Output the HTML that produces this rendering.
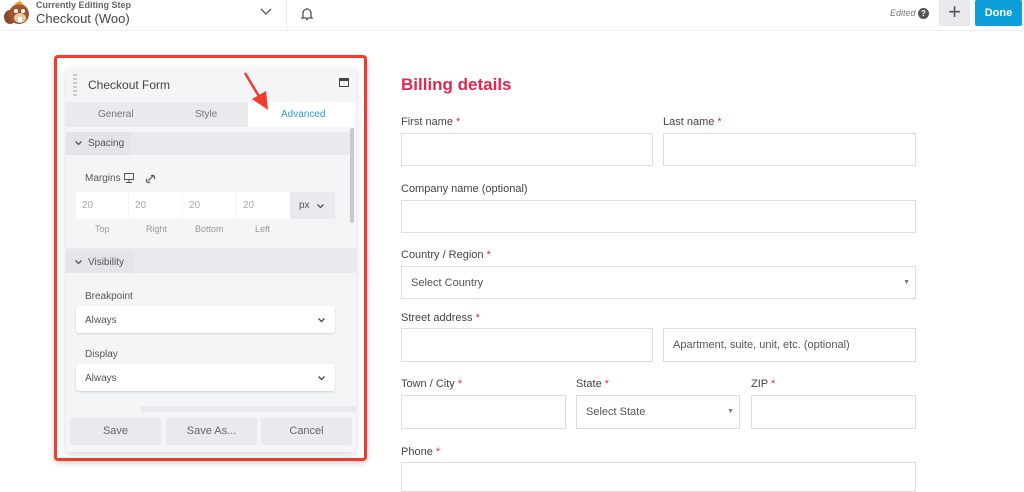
<!DOCTYPE html>
<html><head><meta charset="utf-8"><style>
*{box-sizing:border-box;margin:0;padding:0}
body{width:1024px;height:473px;overflow:hidden;background:#fff;font-family:"Liberation Sans",sans-serif;position:relative;color:#444}
.a{position:absolute}
.top{left:0;top:0;width:1024px;height:31px;border-bottom:1px solid #eceef0;background:#fff}
.inp{position:absolute;border:1px solid #ddd;background:#fff}
.lbl{position:absolute;font-size:11px;color:#444}
.lbl b{color:#e2264d;font-weight:normal}
.sel{font-size:11px;color:#555;padding:10px 0 0 9px}
.pl{font-size:10px;color:#555}
.mi{position:absolute;top:192px;height:27px;background:#fff;font-size:10px;color:#aaa;padding:8px 0 0 6px}
.ml{position:absolute;top:224px;font-size:9px;color:#999}
.ss{position:absolute;left:76px;width:259px;height:27px;background:#fff;border-radius:3px;box-shadow:0 1px 2px rgba(0,0,0,.15);font-size:10px;color:#555;padding:9px 0 0 9px}
.btn{position:absolute;top:418px;height:27px;width:91px;background:#e8eaed;font-size:11px;color:#666;text-align:center;line-height:27px;border-radius:2px}
.chev{position:absolute}
</style></head><body>
<div class="a top"></div>
<svg class="a" style="left:2px;top:1px" width="28" height="26" viewBox="0 0 28 26"><ellipse cx="8" cy="16" rx="6" ry="7" fill="#8a4a2a"/><circle cx="17" cy="13" r="10" fill="#a0552e"/><ellipse cx="18" cy="17" rx="6" ry="5" fill="#e9c7a0"/><rect x="16" y="16" width="4" height="5" fill="#fff"/><circle cx="14" cy="10" r="2" fill="#fff"/><circle cx="21" cy="10" r="2" fill="#fff"/><path d="M12 3 L18 0 L22 4 Z" fill="#f29b1d"/></svg>
<div class="a" style="left:36px;top:0;font-size:9px;color:#666;font-weight:bold">Currently Editing Step</div>
<div class="a" style="left:36px;top:11px;font-size:13px;color:#444">Checkout (Woo)</div>
<svg class="a" style="left:260px;top:8px" width="12" height="8"><path d="M1 1 L6 6 L11 1" stroke="#666" stroke-width="1.5" fill="none"/></svg>
<div class="a" style="left:286px;top:0;width:1px;height:30px;background:#eceef0"></div>
<svg class="a" style="left:299px;top:6px" width="16" height="16" viewBox="0 0 16 16"><path d="M4 11 V7 a4 4 0 0 1 8 0 V11 L13 12 H3 Z M7 13.5 h2" stroke="#555" stroke-width="1.3" fill="none"/><path d="M8 2v1" stroke="#555"/></svg>
<div class="a" style="left:890px;top:8px;font-size:9px;font-style:italic;color:#777">Edited</div>
<div class="a" style="left:918px;top:8px;width:11px;height:11px;border-radius:50%;background:#555;color:#fff;font-size:8px;font-weight:bold;text-align:center;line-height:11px">?</div>
<div class="a" style="left:939px;top:0;width:31px;height:26px;background:#e8eaed;text-align:center;font-size:22px;color:#555;line-height:24px">+</div>
<div class="a" style="left:975px;top:0;width:47px;height:26px;background:#0e9fd8;color:#fff;font-size:11px;font-weight:bold;text-align:center;line-height:26px;border-radius:2px">Done</div>

<div class="a" style="left:54px;top:55px;width:313px;height:406px;border:3px solid #f23b2f;border-radius:4px;box-shadow:0 2px 6px rgba(0,0,0,.2)"></div>
<div class="a" style="left:66px;top:68px;width:290px;height:384px;background:#f4f5f7;box-shadow:0 3px 8px rgba(0,0,0,.15)"></div>
<div class="a" style="left:73px;top:74px;width:4px;height:22px;border-left:2px dotted #ccc;border-right:2px dotted #ccc"></div>
<div class="a" style="left:88px;top:78px;font-size:12px;color:#444">Checkout Form</div>
<div class="a" style="left:339px;top:78px;width:10px;height:9px;border:1.5px solid #444;border-top-width:3px"></div>
<div class="a" style="left:66px;top:102px;width:290px;height:25px;background:#e8eaed"></div>
<div class="a" style="left:248px;top:102px;width:108px;height:25px;background:#fff"></div>
<div class="a" style="left:98px;top:109px;font-size:10px;color:#777">General</div>
<div class="a" style="left:195px;top:109px;font-size:10px;color:#777">Style</div>
<div class="a" style="left:281px;top:109px;font-size:10px;color:#2a9fc9">Advanced</div>
<svg class="a" style="left:240px;top:70px" width="32" height="42"><path d="M5 3 L20 28" stroke="#f23b2f" stroke-width="2.5"/><path d="M12 29 L28 40 L26 21 Z" fill="#f23b2f"/></svg>
<div class="a" style="left:66px;top:132px;width:284px;height:23px;background:#e8eaed"></div>
<div class="a" style="left:66px;top:132px;width:65px;height:23px;background:#e3e5e9"></div>
<svg class="chev" style="left:75px;top:141px" width="7" height="5"><path d="M0.5 0.5 L3.5 3.5 L6.5 0.5" stroke="#555" stroke-width="1.3" fill="none"/></svg>
<div class="a" style="left:88px;top:138px;font-size:10px;color:#555">Spacing</div>
<div class="a" style="left:350px;top:128px;width:4px;height:95px;background:#c8cacd;border-radius:2px"></div>
<div class="a" style="left:85px;top:173px;font-size:10px;color:#555">Margins</div>
<svg class="a" style="left:124px;top:173px" width="34" height="11"><rect x="0.5" y="0.5" width="9" height="6" fill="none" stroke="#555"/><path d="M5 7v2M2 9.5h6" stroke="#555"/><path d="M24 8 l6 -6 M23 6 a2 2 0 0 0 3 3 M27 3 a2 2 0 0 1 3 3" stroke="#555" fill="none" stroke-width="1.2"/></svg>
<div class="mi" style="left:76px;width:52px;border-radius:3px 0 0 3px">20</div>
<div class="mi" style="left:129px;width:53px">20</div>
<div class="mi" style="left:183px;width:53px">20</div>
<div class="mi" style="left:237px;width:53px">20</div>
<div class="mi" style="left:290px;width:45px;background:#e8eaed;color:#555;padding-left:9px">px</div>
<svg class="chev" style="left:317px;top:204px" width="7" height="5"><path d="M0.5 0.5 L3.5 3.5 L6.5 0.5" stroke="#555" stroke-width="1.3" fill="none"/></svg>
<div class="ml" style="left:95px">Top</div><div class="ml" style="left:146px">Right</div><div class="ml" style="left:195px">Bottom</div><div class="ml" style="left:255px">Left</div>
<div class="a" style="left:66px;top:248px;width:290px;height:25px;background:#e8eaed"></div>
<div class="a" style="left:66px;top:251px;width:67px;height:22px;background:#e3e5e9"></div>
<svg class="chev" style="left:75px;top:260px" width="7" height="5"><path d="M0.5 0.5 L3.5 3.5 L6.5 0.5" stroke="#555" stroke-width="1.3" fill="none"/></svg>
<div class="a" style="left:88px;top:257px;font-size:10px;color:#555">Visibility</div>
<div class="a pl" style="left:85px;top:291px">Breakpoint</div>
<div class="ss" style="top:306px">Always</div>
<svg class="chev" style="left:318px;top:318px" width="7" height="5"><path d="M0.5 0.5 L3.5 3.5 L6.5 0.5" stroke="#444" stroke-width="1.3" fill="none"/></svg>
<div class="a pl" style="left:85px;top:349px">Display</div>
<div class="ss" style="top:364px">Always</div>
<svg class="chev" style="left:318px;top:376px" width="7" height="5"><path d="M0.5 0.5 L3.5 3.5 L6.5 0.5" stroke="#444" stroke-width="1.3" fill="none"/></svg>
<div class="a" style="left:66px;top:406px;width:290px;height:46px;background:#e8eaed"></div>
<div class="a" style="left:66px;top:406px;width:75px;height:6px;background:#f4f5f7"></div>
<div class="a" style="left:66px;top:412px;width:290px;height:40px;background:#f4f5f7"></div>
<div class="btn" style="left:70px">Save</div><div class="btn" style="left:166px">Save As...</div><div class="btn" style="left:261px">Cancel</div>

<div class="a" style="left:401px;top:75px;font-size:17px;font-weight:bold;color:#e2264d">Billing details</div>
<div class="lbl" style="left:401px;top:116px">First name <b>*</b></div>
<div class="lbl" style="left:663px;top:116px">Last name <b>*</b></div>
<div class="inp" style="left:401px;top:133px;width:252px;height:33px"></div>
<div class="inp" style="left:663px;top:133px;width:253px;height:33px"></div>
<div class="lbl" style="left:401px;top:183px">Company name (optional)</div>
<div class="inp" style="left:401px;top:200px;width:515px;height:33px"></div>
<div class="lbl" style="left:401px;top:249px">Country / Region <b>*</b></div>
<div class="inp sel" style="left:401px;top:266px;width:515px;height:33px">Select Country<span style="position:absolute;right:5px;top:12px;font-size:7px;color:#777">▼</span></div>
<div class="lbl" style="left:401px;top:312px">Street address <b>*</b></div>
<div class="inp" style="left:401px;top:328px;width:252px;height:34px"></div>
<div class="inp sel" style="left:663px;top:328px;width:253px;height:34px">Apartment, suite, unit, etc. (optional)</div>
<div class="lbl" style="left:401px;top:378px">Town / City <b>*</b></div>
<div class="lbl" style="left:576px;top:378px">State <b>*</b></div>
<div class="lbl" style="left:751px;top:378px">ZIP <b>*</b></div>
<div class="inp" style="left:401px;top:395px;width:165px;height:34px"></div>
<div class="inp sel" style="left:576px;top:395px;width:164px;height:34px">Select State<span style="position:absolute;right:5px;top:12px;font-size:7px;color:#777">▼</span></div>
<div class="inp" style="left:751px;top:395px;width:165px;height:34px"></div>
<div class="lbl" style="left:401px;top:446px">Phone <b>*</b></div>
<div class="inp" style="left:401px;top:462px;width:515px;height:30px"></div>
</body></html>
